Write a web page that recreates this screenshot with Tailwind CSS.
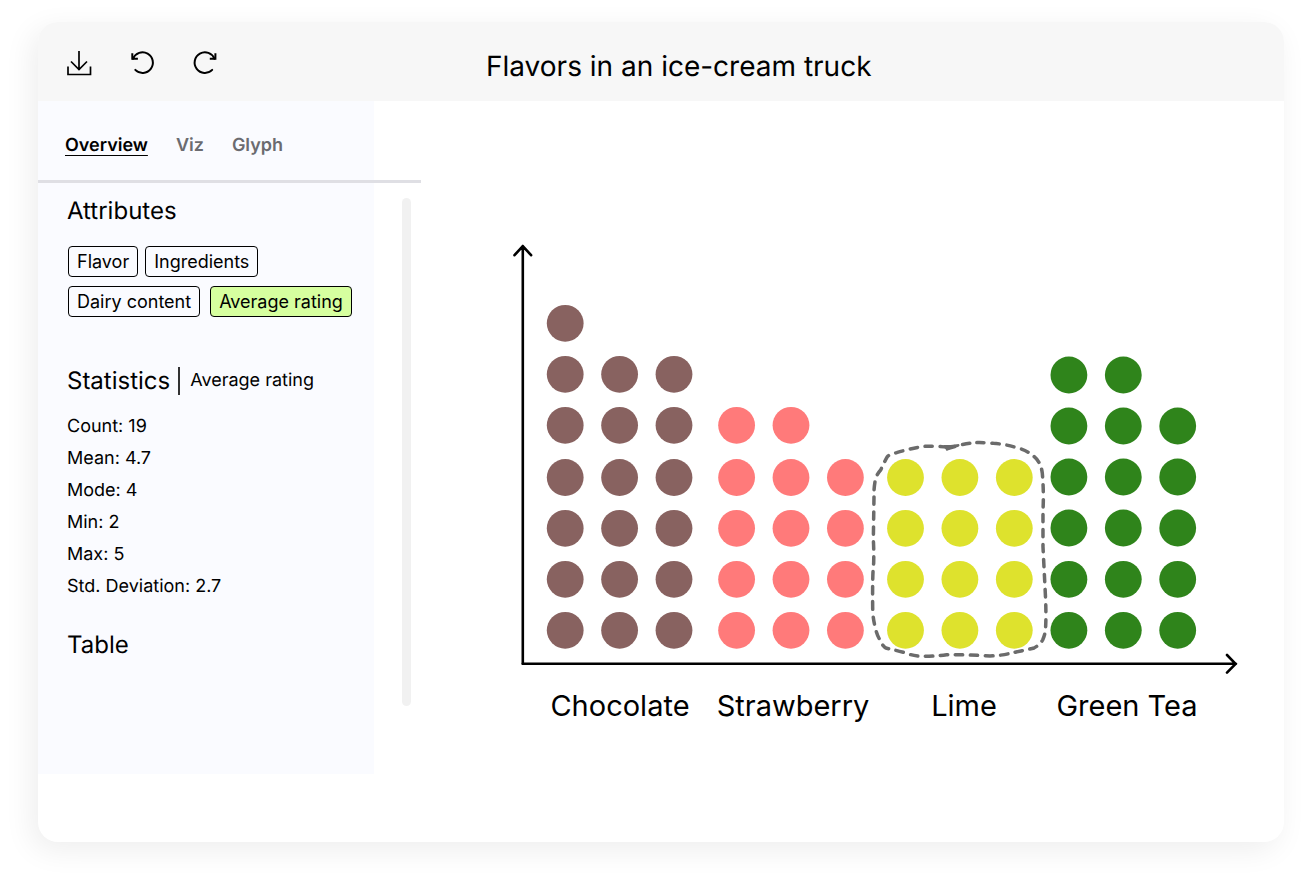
<!DOCTYPE html>
<html lang="en">
<head>
<meta charset="utf-8">
<meta name="viewport" content="width=device-width, initial-scale=1">
<title>Flavors in an ice-cream truck</title>
<script src="https://cdn.jsdelivr.net/npm/@tailwindcss/browser@4"></script>
</head>
<body class="flex min-h-screen bg-white pt-[22px] pr-[22px] pb-[38px] pl-[38px] font-['Inter','Liberation_Sans',sans-serif] text-black">
<div class="flex flex-1 flex-col overflow-hidden rounded-[20px] bg-white shadow-[-6px_8px_30px_rgba(0,0,0,0.07)]">
  <header class="flex h-[79px] shrink-0 items-center bg-[#f7f7f7]">
    <div class="flex w-[448px] shrink-0 items-center gap-8 pt-[2px] pl-6" role="toolbar" aria-label="Chart tools">
      <button type="button" aria-label="Download" class="size-[34px]">
        <svg class="size-[34px]" viewBox="62 46 34 34" fill="none" stroke="currentColor" stroke-width="1.700"><path d="M79 51v18.500M71 61.500l8 8 8-8M68 66.500v8h22.500v-8"/></svg>
      </button>
      <button type="button" aria-label="Undo" class="size-[30px]">
        <svg class="size-[30px]" viewBox="128 48 30 30" fill="none" stroke="currentColor" stroke-width="2"><path stroke-linecap="round" d="M135.300 69.900A10.300 10.300 0 1 0 133 58.800"/><path d="M132.300 53.200v5.600h5.600"/></svg>
      </button>
      <button type="button" aria-label="Redo" class="size-[30px]">
        <svg class="size-[30px]" viewBox="189 48 30 30" fill="none" stroke="currentColor" stroke-width="2"><path stroke-linecap="round" d="M211.200 69.900A10.300 10.300 0 1 1 213.500 58.800"/><path d="M214.400 53.200v5.600h-5.600"/></svg>
      </button>
    </div>
    <h1 class="pt-2 text-[28px] leading-9 [text-rendering:geometricPrecision]">Flavors in an ice-cream truck</h1>
  </header>
  <div class="flex flex-1">
    <aside class="w-[383px] shrink-0">
      <nav class="flex h-[79px] w-[336px] items-center gap-7 bg-[#fafbff] pt-[10px] pl-[27px] text-lg font-semibold text-[#6b6b70] [text-rendering:geometricPrecision]">
        <a href="#overview" aria-current="page" class="text-black underline decoration-1 underline-offset-4">Overview</a>
        <a href="#viz">Viz</a>
        <a href="#glyph">Glyph</a>
      </nav>
      <hr class="h-[3px] border-0 bg-[#dfdfe4]">
      <div class="flex items-start">
        <div class="h-[591px] w-[336px] bg-[#fafbff] pl-[29px] [text-rendering:geometricPrecision]">
          <h2 class="pt-3 text-2xl">Attributes</h2>
          <div class="mt-[19px] flex flex-wrap gap-x-[7px] gap-y-[9px] pl-px text-lg">
            <button type="button" class="h-[31px] rounded border border-black px-2 leading-[30px]">Flavor</button>
            <button type="button" class="h-[31px] rounded border border-black px-2 leading-[30px]">Ingredients</button>
            <button type="button" class="mr-[3px] h-[31px] rounded border border-black px-2 leading-[30px]">Dairy content</button>
            <button type="button" aria-pressed="true" class="h-[31px] rounded border border-black bg-[#d6ff9f] px-2 leading-[30px]">Average rating</button>
          </div>
          <div class="mt-12 flex items-center">
            <h2 class="text-2xl">Statistics</h2>
            <span class="ml-2 h-7 w-[2px] bg-black/80"></span>
            <span class="ml-[10px] text-lg">Average rating</span>
          </div>
          <ul class="mt-[14px] text-lg leading-8">
            <li>Count: 19</li>
            <li>Mean: 4.7</li>
            <li>Mode: 4</li>
            <li>Min: 2</li>
            <li>Max: 5</li>
            <li>Std. Deviation: 2.7</li>
          </ul>
          <h2 class="mt-[26px] text-2xl">Table</h2>
        </div>
        <div class="mt-[15px] ml-7 h-[508px] w-[9px] rounded-full bg-[#f1f1f1]"></div>
      </div>
    </aside>
    <main class="min-w-0 flex-1">
      <svg class="w-full" viewBox="0 0 863 640" role="img" aria-label="Dot chart of flavors" font-size="29" text-anchor="middle">
        <g fill="none" stroke="#000" stroke-width="2.600" stroke-linecap="round" stroke-linejoin="round">
          <path d="M101.800 562.800V145M93.500 154.200l8.300-9 8.300 9"/>
          <path d="M101.800 562.800H815M806 554l8.600 8.800-8.600 8.800"/>
        </g>
        <g id="dots"></g>
        <path transform="translate(439 329) scale(.3333)" fill="none" stroke="#6b6b6b" stroke-width="10.500" stroke-linecap="round" stroke-linejoin="round" stroke-dasharray="22 23" d="M262 52C240 48 215 48 195 49C165 52 130 62 110 68Q90 72 82 80Q72 98 62 120Q48 135 45 155Q41 180 42 200L40 330Q42 360 41 400Q37 430 38 530Q38 560 44 585Q50 615 60 630Q68 650 80 655Q105 660 135 668Q155 677 180 679Q215 680 260 674Q320 674 390 678Q430 676 450 670L520 655Q540 645 548 630Q557 610 557 590Q559 550 556 490L549 350V240Q552 190 547 130Q543 95 520 78Q500 60 470 53Q435 42 400 40Q370 37 345 38Q320 40 290 48L262 56"/>
        <path transform="translate(439 329) scale(.3333)" fill="#6b6b6b" d="M250 45h22l24-3q6 5-2 9l-20 4-14 8-6-10z"/>
        <text x="199" y="615">Chocolate</text>
        <text x="372" y="615">Strawberry</text>
        <text x="543" y="615">Lime</text>
        <text x="706" y="615">Green Tea</text>
      </svg>
    </main>
  </div>
</div>
<script>
  // One entry per flavor: left column centre, row centres from the bottom up, dots per column.
  const groups = [
    { x: 144.2, color: '#886260', counts: [7, 6, 6], rows: [529.3, 478.3, 427.3, 376.5, 324.3, 273.3, 222.3] },
    { x: 315.6, color: '#ff7a7a', counts: [5, 5, 4], rows: [529.3, 478.3, 427.3, 376.5, 324.3] },
    { x: 484.5, color: '#dee22d', counts: [4, 4, 4], rows: [529.3, 478.3, 427.3, 376.5] },
    { x: 647.9, color: '#2f841b', counts: [6, 6, 5], rows: [529.3, 478.3, 427, 376, 325, 274] }
  ];
  const layer = document.getElementById('dots');
  for (const g of groups) {
    g.counts.forEach((n, col) => {
      for (let i = 0; i < n; i++) {
        const dot = document.createElementNS('http://www.w3.org/2000/svg', 'circle');
        dot.setAttribute('cx', g.x + col * 54.4);
        dot.setAttribute('cy', g.rows[i]);
        dot.setAttribute('r', 18.4);
        dot.setAttribute('fill', g.color);
        layer.appendChild(dot);
      }
    });
  }
</script>
</body>
</html>
